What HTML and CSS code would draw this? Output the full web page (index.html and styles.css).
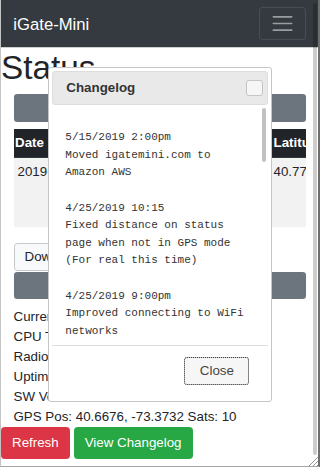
FILE: index.html
```html
<!DOCTYPE html>
<html lang="en">

<head>
    <meta charset="UTF-8">
    <meta name="viewport" content="width=device-width, initial-scale=1.0">
    <title>iGate-Mini</title>
    <link rel="stylesheet" href="styles.css">
</head>

<body>

    <div class="screen">

        <nav class="navbar">
            <span class="brand">iGate-Mini</span>
            <button class="toggler" type="button">
                <svg width="25" height="25" viewBox="0 0 30 30">
                    <path d="M4 7h22M4 15h22M4 23h22" stroke="rgba(255,255,255,.5)" stroke-width="2" stroke-linecap="round" fill="none" />
                </svg>
            </button>
        </nav>

        <h1 class="title">Status</h1>

        <div class="container">
            <div class="bar">Recent Packets</div>

            <div class="table-wrap">
                <table class="packets">
                    <colgroup>
                        <col class="col-date">
                        <col class="col-lat">
                        <col class="col-lon">
                        <col class="col-path">
                    </colgroup>
                    <thead>
                        <tr>
                            <th class="th-date">Date</th>
                            <th>Latitude</th>
                            <th>Longitude</th>
                            <th>Path</th>
                        </tr>
                    </thead>
                    <tbody>
                        <tr>
                            <td>2019-05-16 14:02</td>
                            <td>40.7712</td>
                            <td>-73.9510</td>
                            <td>WIDE1-1,<br>WIDE2-1,<br>qAR</td>
                        </tr>
                    </tbody>
                </table>
            </div>

            <div class="tools">
                <button class="btn btn-light" type="button">Download</button>
            </div>

            <div class="bar bar-info">System</div>

            <div class="info">
                <div>Current Time: 14:02</div>
                <div>CPU Temp: 48 C</div>
                <div>Radio: 144.390</div>
                <div>Uptime: 2d 4h</div>
                <div>SW Version: 1.0.7</div>
                <div>GPS Pos: 40.6676, -73.3732 Sats: 10</div>
            </div>
        </div>

        <div class="actions">
            <button class="btn btn-danger" type="button">Refresh</button>
            <button class="btn btn-success" type="button">View Changelog</button>
        </div>

        <div class="page-thumb"></div>

        <svg class="resizer" width="10" height="10" viewBox="0 0 10 10">
            <path d="M1 10L10 1M5 10L10 5M9 10L10 9" stroke="#9a9a9a" stroke-width="1" fill="none" />
        </svg>

        <!-- changelog dialog -->
        <div class="dialog">
            <div class="dialog-title">
                <span>Changelog</span>
                <button class="dialog-close" type="button"></button>
            </div>
            <div class="dialog-body">
<pre class="changelog">

5/15/2019 2:00pm
Moved igatemini.com to
Amazon AWS

4/25/2019 10:15
Fixed distance on status
page when not in GPS mode
(For real this time)

4/25/2019 9:00pm
Improved connecting to WiFi
networks
</pre>
                <div class="dialog-thumb"></div>
            </div>
            <div class="dialog-pane">
                <button class="dialog-button" type="button">Close</button>
            </div>
        </div>

    </div>

</body>

</html>
```

FILE: styles.css
```css
html {
    font-size: 13.333px;
}

body {
    margin: 0;
    font-family: "Liberation Sans", Arial, sans-serif;
    font-size: 1rem;
    line-height: 1.5;
    color: #212529;
    background: #fff;
}

.screen {
    position: relative;
    height: 466px;
    border-left: 1px solid #c4c4c4;
    border-right: 2px solid #6f6f6f;
    border-bottom: 1px solid #a6a6a6;
    overflow: hidden;
}

/* top bar */
.navbar {
    display: flex;
    align-items: center;
    justify-content: space-between;
    height: 46.67px;
    margin: 0 -2px 0 -1px;
    padding: 0 14.5px 0 13.33px;
    background: #343a40;
    border-bottom: 1px solid #cfcfcf;
}

.brand {
    margin-top: 3px;
    color: #fff;
    font-size: 16.67px;
    line-height: 25px;
}

.toggler {
    display: flex;
    align-items: center;
    justify-content: center;
    width: 47px;
    height: 33.33px;
    padding: 0;
    border: 1px solid rgba(255, 255, 255, .1);
    border-radius: 3.33px;
    background: transparent;
}

.title {
    margin: 0 0 6.67px;
    font-size: 33.33px;
    font-weight: normal;
    line-height: 40px;
}

.container {
    padding: 0 12.5px;
}

.bar {
    height: 28px;
    margin-bottom: 7px;
    border-radius: 3.33px;
    background: #6c757d;
    color: #fff;
    text-align: center;
    line-height: 28px;
}

.bar-info {
    height: 27px;
    line-height: 27px;
    margin-bottom: 7.5px;
}

/* packet table */
.table-wrap {
    overflow: hidden;
    margin-bottom: 15.3px;
}

.packets {
    width: 560px;
    table-layout: fixed;
    border-collapse: collapse;
}

.col-date {
    width: 256px;
}

.col-lat {
    width: 90px;
}

.col-lon {
    width: 100px;
}

.packets th {
    padding: 4px;
    background: #212529;
    color: #fff;
    font-weight: bold;
    text-align: left;
    line-height: 20px;
    border-bottom: 1px solid #32383e;
}

.packets .th-date {
    padding-left: 1.5px;
}

.packets td {
    padding: 4px 4px 5px;
    background: #f2f2f2;
    line-height: 20px;
    vertical-align: top;
    white-space: nowrap;
    border-top: 1px solid #e4e4e4;
}

.tools {
    display: flex;
    margin-bottom: 1.4px;
}

.btn {
    display: inline-block;
    padding: 5px 10px;
    border: 1px solid transparent;
    border-radius: 3.33px;
    font-family: inherit;
    font-size: 1rem;
    line-height: 20px;
}

.btn-light {
    padding-top: 3px;
    padding-bottom: 3px;
    background: #f8f9fa;
    border-color: #c6c8ca;
    color: #212529;
}

.btn-danger {
    background: #dc3545;
    border-color: #dc3545;
    color: #fff;
}

.btn-success {
    background: #28a745;
    border-color: #28a745;
    color: #fff;
}

.info {
    line-height: 20px;
}

.actions {
    display: flex;
    gap: 4px;
}

/* overlay scroll bits */
.page-thumb {
    position: absolute;
    top: 3px;
    right: 1px;
    width: 4px;
    height: 452px;
    border-radius: 2px;
    background: rgba(0, 0, 0, .2);
}

.resizer {
    position: absolute;
    right: 0;
    bottom: 0;
}

/* dialog */
.dialog {
    position: absolute;
    left: 47px;
    top: 67px;
    width: 224px;
    box-sizing: border-box;
    padding: 3px;
    border: 1px solid #c5c5c5;
    border-radius: 3px;
    background: #fff;
}

.dialog-title {
    display: flex;
    align-items: center;
    justify-content: space-between;
    height: 34px;
    box-sizing: border-box;
    padding: 0 4.3px 0 13.33px;
    border: 1px solid #ddd;
    border-radius: 3px;
    background: #e9e9e9;
    color: #333;
    font-weight: bold;
}

.dialog-close {
    width: 16.7px;
    height: 16.7px;
    padding: 0;
    border: 1px solid #c5c5c5;
    border-radius: 3px;
    background: #f6f6f6;
}

.dialog-body {
    position: relative;
    height: 233.3px;
    box-sizing: border-box;
    padding: 6.67px 13.33px;
    overflow: hidden;
}

.changelog {
    margin: 0;
    font-family: "Liberation Mono", monospace;
    font-size: 11px;
    line-height: 17.6px;
    color: #333;
}

.dialog-thumb {
    position: absolute;
    top: 3px;
    right: 2px;
    width: 4.3px;
    height: 54px;
    border-radius: 3px;
    background: #c1c1c1;
}

.dialog-pane {
    display: flex;
    justify-content: flex-end;
    margin-top: 6.67px;
    padding: 4px 13.33px 6.67px 5.33px;
    border-top: 1px solid #ddd;
}

.dialog-button {
    width: 65px;
    height: 28px;
    margin: 6.67px 5.33px 6.67px 0;
    padding: 0;
    border: 1px solid #c5c5c5;
    border-radius: 3px;
    background: #f6f6f6;
    color: #454545;
    font-family: inherit;
    font-size: 1rem;
    outline: 1px dotted #444;
    outline-offset: -1px;
}
```
